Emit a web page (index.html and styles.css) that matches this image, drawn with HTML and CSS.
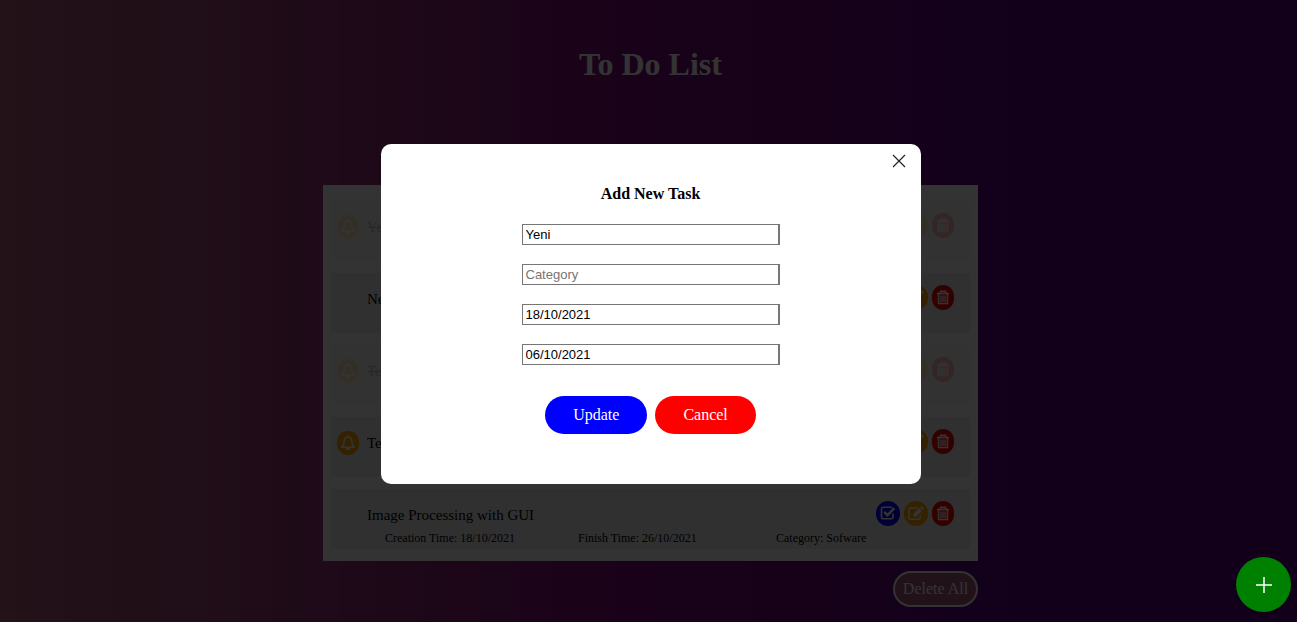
FILE: index.html
```html
<!DOCTYPE html>
<html lang="en">
<head>
<meta charset="utf-8">
<title>To Do List</title>
<link rel="stylesheet" href="styles.css">
</head>
<body>
<svg class="sprite" aria-hidden="true">
  <symbol id="bell" viewBox="0 0 16 16"><path fill="none" stroke="currentColor" stroke-width="1.600" stroke-linejoin="round" d="M8 2C5.400 2 4.300 4 4.300 6.300C4.300 9.500 3 11 1.800 12.300H14.200C13 11 11.700 9.500 11.700 6.300C11.700 4 10.600 2 8 2Z"/><path fill="currentColor" d="M7.200.4h1.600v1.800H7.200zM5.700 13h4.600a2.300 2.300 0 0 1-4.600 0z"/></symbol>
  <symbol id="check" viewBox="0 0 16 16"><path fill="none" stroke="currentColor" stroke-width="1.600" d="M13 7.500V11Q13 12.700 11.300 12.700H3.200Q1.500 12.700 1.500 11V2.900Q1.500 1.200 3.200 1.200H11.300L12.300 1.500"/><path fill="none" stroke="currentColor" stroke-width="2.600" d="M4.200 5.900L7.500 9.100L14.500 2.100"/></symbol>
  <symbol id="edit" viewBox="0 0 16 16"><path fill="none" stroke="currentColor" stroke-width="1.500" d="M12.300 9.200V11.500Q12.300 13.200 10.600 13.200H2.700Q1 13.200 1 11.500V3.600Q1 1.900 2.700 1.900H9.500"/><path fill="currentColor" d="M5.500 10.500V7.700L11.300 1.900L14.100 4.700L8.300 10.500ZM12 1.200L12.800.4Q13.500 0 14.200.5L15.500 1.800Q16 2.500 15.500 3.200L14.800 4Z"/></symbol>
  <symbol id="trash" viewBox="0 0 16 16"><path fill="none" stroke="currentColor" stroke-width="1.500" d="M5.500 3V1.300H10.500V3M3.500 4V13.500H12.500V4"/><path fill="none" stroke="currentColor" stroke-width="1.800" d="M2 3.500H14"/><path stroke="currentColor" stroke-width="1.300" d="M5.900 5.500V12M8 5.500V12M10.100 5.500V12"/></symbol>
</svg>
<main class="page">
  <h1 class="page-title">To Do List</h1>
  <ul class="tasks">
    <li class="task done">
      <span class="badge bell"><svg><use href="#bell"/></svg></span>
      <span class="name">Yeni</span>
      <span class="actions"><button class="badge edit" aria-label="Edit"><svg><use href="#edit"/></svg></button><button class="badge trash" aria-label="Delete"><svg><use href="#trash"/></svg></button></span>
    </li>
    <li class="task">
      <span></span>
      <span class="name">New</span>
      <span class="actions"><button class="badge check" aria-label="Complete"><svg><use href="#check"/></svg></button><button class="badge edit" aria-label="Edit"><svg><use href="#edit"/></svg></button><button class="badge trash" aria-label="Delete"><svg><use href="#trash"/></svg></button></span>
    </li>
    <li class="task done">
      <span class="badge bell"><svg><use href="#bell"/></svg></span>
      <span class="name">Test</span>
      <span class="actions"><button class="badge edit" aria-label="Edit"><svg><use href="#edit"/></svg></button><button class="badge trash" aria-label="Delete"><svg><use href="#trash"/></svg></button></span>
    </li>
    <li class="task">
      <span class="badge bell"><svg><use href="#bell"/></svg></span>
      <span class="name">Test</span>
      <span class="actions"><button class="badge check" aria-label="Complete"><svg><use href="#check"/></svg></button><button class="badge edit" aria-label="Edit"><svg><use href="#edit"/></svg></button><button class="badge trash" aria-label="Delete"><svg><use href="#trash"/></svg></button></span>
    </li>
    <li class="task">
      <span></span>
      <span class="name">Image Processing with GUI</span>
      <span class="actions"><button class="badge check" aria-label="Complete"><svg><use href="#check"/></svg></button><button class="badge edit" aria-label="Edit"><svg><use href="#edit"/></svg></button><button class="badge trash" aria-label="Delete"><svg><use href="#trash"/></svg></button></span>
      <span class="details"><span>Creation Time: 18/10/2021</span><span>Finish Time: 26/10/2021</span><span>Category: Sofware</span></span>
    </li>
  </ul>
  <button class="delete-all">Delete All</button>
</main>
<div class="overlay">
  <form class="modal" role="dialog" aria-labelledby="modal-title">
    <button class="close" type="button" aria-label="Close"><svg viewBox="0 0 14 14"><path stroke="currentColor" stroke-width="1.200" d="M1 1L13 13M13 1L1 13"/></svg></button>
    <h2 class="modal-title" id="modal-title">Add New Task</h2>
    <div class="fields">
      <input type="text" aria-label="Task" value="Yeni">
      <input type="text" aria-label="Category" placeholder="Category">
      <input type="text" aria-label="Creation time" value="18/10/2021">
      <input type="text" aria-label="Finish time" value="06/10/2021">
    </div>
    <div class="buttons"><button class="pill update" type="button">Update</button><button class="pill cancel" type="button">Cancel</button></div>
  </form>
</div>
<button class="add" aria-label="Add task"><svg viewBox="0 0 18 18"><path stroke="currentColor" stroke-width="1.500" d="M9 1V17M1 9H17"/></svg></button>
</body>
</html>
```
FILE: styles.css
```css
* { box-sizing: border-box; }
body {
  margin: 0;
  min-height: 100vh;
  padding-left: 4px;
  font-family: "Liberation Serif", "Times New Roman", serif;
  font-size: 16px;
  color: #000;
  background: linear-gradient(to right, #af5a78, #a04678 15%, #820f7d 45%, #5a0082 81%);
}
button { font-family: inherit; border: 0; padding: 0; cursor: pointer; }
svg { display: block; }
.sprite { display: none; }
.page {
  width: 655px;
  max-width: 100%;
  margin: 0 auto;
  padding: 46px 0 15px;
  display: flex;
  flex-direction: column;
}
.page-title {
  margin: 0 0 102px;
  font-size: 32px;
  line-height: 37px;
  text-align: center;
  color: #fff;
}
.tasks {
  margin: 0;
  padding: 16px 8px 12px;
  list-style: none;
  display: grid;
  gap: 12px;
  background: #fff;
}
.task {
  height: 60px;
  padding: 12px 16px 0 6px;
  display: grid;
  grid-template-columns: 30px 1fr auto;
  align-content: start;
  background: #f0f0f0;
}
.task.done { opacity: 0.25; }
.done .name { text-decoration: line-through; }
.name { font-size: 15px; line-height: 28px; }
.actions { display: flex; gap: 4px; }
.badge {
  width: 24px;
  height: 25px;
  border-radius: 12px;
  display: grid;
  place-items: center;
  color: #fff;
}
.badge svg { width: 16px; height: 16px; }
.bell, .edit { background: orange; }
.bell { width: 22px; height: 24px; margin-top: 2px; }
.check { background: blue; }
.trash { width: 22px; background: red; }
.details {
  grid-column: 1 / -1;
  padding-left: 48px;
  display: grid;
  grid-template-columns: 193px 198px auto;
  font-size: 12px;
  line-height: 18px;
}
.delete-all {
  align-self: flex-end;
  width: 85px;
  height: 36px;
  margin-top: 10px;
  border: 2px solid #fff;
  border-radius: 18px;
  font-size: 16px;
  color: #fff;
  background: #a55a82;
}
.overlay {
  position: fixed;
  inset: 0;
  display: flex;
  justify-content: center;
  align-items: flex-start;
  padding: 144px 0 0 4px;
  background: rgba(0, 0, 0, 0.8);
}
.modal {
  width: 540px;
  padding: 10px 15px 50px;
  border-radius: 10px;
  display: flex;
  flex-direction: column;
  align-items: center;
  background: #fff;
}
.close { align-self: flex-end; color: #222; background: none; }
.close svg { width: 14px; height: 14px; }
.modal-title { margin: 16px 0 20px; font-size: 16px; line-height: 20px; }
.fields { display: grid; gap: 19px; width: 258px; }
.fields input {
  width: 100%;
  height: 21px;
  padding: 1px 3px;
  border: 1px solid #767676;
  border-right-width: 2px;
  font: 13px "Liberation Sans", Arial, sans-serif;
  color: #000;
}
.fields input::placeholder { color: #757575; }
.buttons { margin-top: 31px; display: flex; gap: 8px; }
.pill {
  height: 38px;
  padding: 0 28px;
  border-radius: 19px;
  font-size: 16px;
  color: #fff;
}
.update { background: blue; }
.cancel { background: red; }
.add {
  position: fixed;
  right: 6px;
  bottom: 10px;
  width: 55px;
  height: 55px;
  border-radius: 50%;
  display: grid;
  place-items: center;
  color: #fff;
  background: green;
}
.add svg { width: 18px; height: 18px; }
```
